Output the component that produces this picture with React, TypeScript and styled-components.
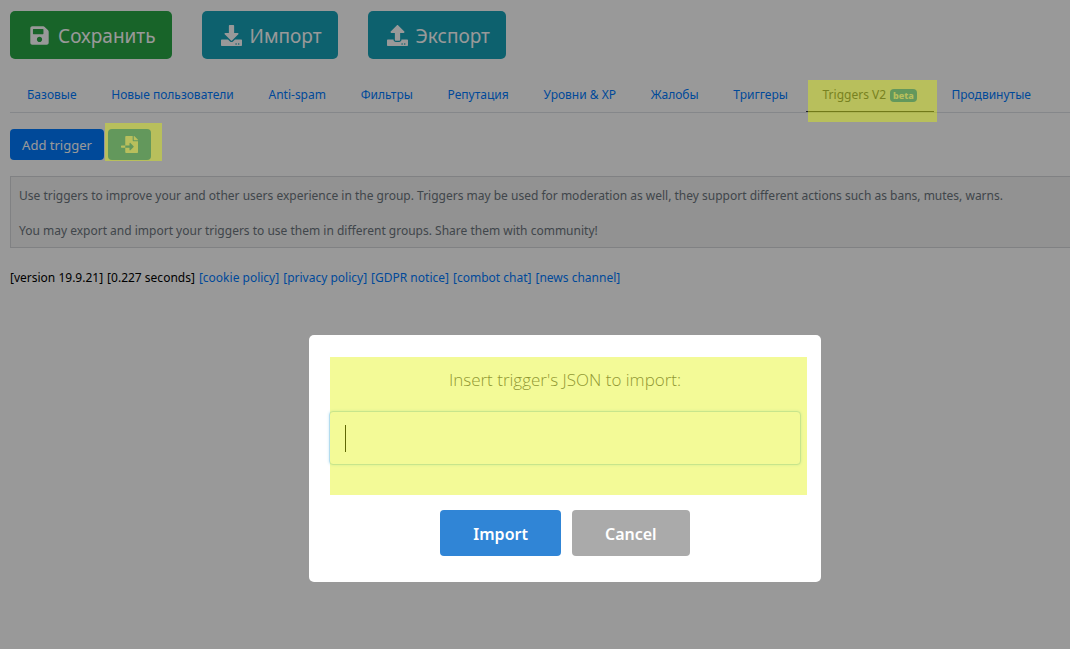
import React from "react";
import styled, { createGlobalStyle } from "styled-components";
import { FaDownload, FaFileImport, FaSave, FaUpload } from "react-icons/fa";

const GlobalStyle = createGlobalStyle`
  *, *::before, *::after { box-sizing: border-box; }
  body {
    margin: 0;
    background: #fff;
    color: #212529;
    font-family: "Noto Sans", "Open Sans", sans-serif;
    font-size: 12px;
    line-height: 18px;
    overflow-x: hidden;
  }
  button, input { font-family: inherit; }
`;

const Page = styled.main`
  min-height: 100vh;
  padding: 11px 0 0 10px;
`;

const Toolbar = styled.div`
  display: flex;
  gap: 30px;
`;

const ToolbarButton = styled.button<{ $tone: string }>`
  display: flex;
  align-items: center;
  gap: 8px;
  height: 48px;
  padding: 1px 16px 0 19px;
  border: 0;
  border-radius: 5px;
  background: ${(p) => p.$tone};
  color: #fff;
  font-size: 19px;
  white-space: nowrap;
`;

const Tabs = styled.nav`
  display: flex;
  justify-content: space-between;
  margin-top: 18px;
  padding-right: 22px;
  height: 36px;
  border-bottom: 1px solid #dee2e6;
  white-space: nowrap;
`;

const Tab = styled.a<{ $active?: boolean }>`
  position: relative;
  display: flex;
  align-items: center;
  gap: 4px;
  height: 35px;
  padding: 2px 17px 0;
  color: ${(p) => (p.$active ? "#495057" : "#007bff")};
  border-bottom: 1px solid ${(p) => (p.$active ? "#343a40" : "transparent")};
  text-decoration: none;
`;

const Badge = styled.span`
  padding: 0 3px;
  border-radius: 4px;
  background: #0c90ff;
  color: #fff;
  font-size: 9px;
  font-weight: 800;
  line-height: 13px;
`;

const Highlight = styled.span<{ $inset: string }>`
  position: absolute;
  inset: ${(p) => p.$inset};
  z-index: 30;
  background: rgba(226, 243, 8, 0.42);
  pointer-events: none;
`;

const Actions = styled.div`
  display: flex;
  gap: 4px;
  margin-top: 16px;
`;

const ActionButton = styled.button<{ $tone: string; $wide?: boolean }>`
  position: relative;
  display: flex;
  align-items: center;
  justify-content: center;
  min-width: ${(p) => (p.$wide ? "94px" : "43px")};
  height: 31px;
  padding: 0 12px;
  border: 0;
  border-radius: 4px;
  background: ${(p) => p.$tone};
  color: #fff;
  font-size: 13px;
  white-space: nowrap;
`;

const Notice = styled.section`
  margin-top: 16px;
  padding: 10px 8px 7px;
  border: 1px solid #d6d8db;
  border-right: 0;
  background: #f3f3f3;
  color: #6c757d;

  p { margin: 0; }
  p + p { margin-top: 17px; }
`;

const Footer = styled.footer`
  display: flex;
  flex-wrap: wrap;
  gap: 4px;
  margin-top: 21px;
  color: #000;
`;

const FooterLink = styled.a`
  color: #007bff;
  text-decoration: none;
`;

const Backdrop = styled.div`
  position: fixed;
  inset: 0;
  z-index: 20;
  display: flex;
  align-items: flex-start;
  justify-content: center;
  padding: 335px 0 0 60px;
  background: rgba(0, 0, 0, 0.4);
`;

const Dialog = styled.form`
  position: relative;
  width: 512px;
  padding: 33px 20px 26px;
  border-radius: 5px;
  background: #fff;
`;

const DialogLabel = styled.label`
  display: block;
  color: #545454;
  font-family: "Open Sans", "Noto Sans", sans-serif;
  font-size: 17px;
  font-weight: 300;
  line-height: 24px;
  text-align: center;
`;

const Field = styled.div`
  position: relative;
  margin-top: 19px;
`;

const TextInput = styled.input`
  display: block;
  width: 100%;
  height: 54px;
  padding: 0 16px;
  border: 1px solid #b4dbed;
  border-radius: 4px;
  outline: 0;
  box-shadow: 0 0 3px #c4e6f5;
  background: #fff;
  font-size: 18px;
`;

const Caret = styled.span`
  position: absolute;
  top: 14px;
  left: 16px;
  width: 1px;
  height: 27px;
  background: #000;
`;

const DialogActions = styled.div`
  display: flex;
  justify-content: center;
  gap: 11px;
  margin-top: 45px;
`;

const DialogButton = styled.button<{ $tone: string }>`
  height: 46px;
  padding: 2px 33px 0;
  border: 0;
  border-radius: 4px;
  background: ${(p) => p.$tone};
  color: #fff;
  font-size: 16px;
  font-weight: 600;
`;

const tabs = [
  "Базовые",
  "Новые пользователи",
  "Anti-spam",
  "Фильтры",
  "Репутация",
  "Уровни & XP",
  "Жалобы",
  "Триггеры",
];

const footerLinks = [
  "cookie policy",
  "privacy policy",
  "GDPR notice",
  "combot chat",
  "news channel",
];

export default function App() {
  return (
    <>
      <GlobalStyle />
      <Page>
        <Toolbar>
          <ToolbarButton type="button" $tone="#28a745">
            <FaSave size={21} />
            Сохранить
          </ToolbarButton>
          <ToolbarButton type="button" $tone="#17a2b8">
            <FaDownload size={21} />
            Импорт
          </ToolbarButton>
          <ToolbarButton type="button" $tone="#17a2b8">
            <FaUpload size={21} />
            Экспорт
          </ToolbarButton>
        </Toolbar>

        <Tabs>
          {tabs.map((name) => (
            <Tab key={name} href="#">
              {name}
            </Tab>
          ))}
          <Tab href="#" $active aria-current="page">
            Triggers V2 <Badge>beta</Badge>
            <Highlight $inset="3px -3px -11px 2px" />
          </Tab>
          <Tab href="#">Продвинутые</Tab>
        </Tabs>

        <Actions>
          <ActionButton type="button" $tone="#007bff" $wide>
            Add trigger
          </ActionButton>
          <ActionButton type="button" $tone="#0c90ff" aria-label="Import trigger">
            <FaFileImport size={17} />
            <Highlight $inset="-6px -11px -1px -3px" />
          </ActionButton>
        </Actions>

        <Notice>
          <p>
            Use triggers to improve your and other users experience in the group. Triggers may be
            used for moderation as well, they support different actions such as bans, mutes, warns.
          </p>
          <p>
            You may export and import your triggers to use them in different groups. Share them with
            community!
          </p>
        </Notice>

        <Footer>
          <span>[version 19.9.21]</span>
          <span>[0.227 seconds]</span>
          {footerLinks.map((name) => (
            <FooterLink key={name} href="#">
              [{name}]
            </FooterLink>
          ))}
        </Footer>
      </Page>

      <Backdrop>
        <Dialog role="dialog" aria-modal="true" aria-labelledby="json-label">
          <DialogLabel id="json-label" htmlFor="json">
            Insert trigger's JSON to import:
          </DialogLabel>
          <Field>
            <TextInput id="json" type="text" />
            <Caret />
          </Field>
          <DialogActions>
            <DialogButton type="button" $tone="#3085d6">
              Import
            </DialogButton>
            <DialogButton type="button" $tone="#aaa">
              Cancel
            </DialogButton>
          </DialogActions>
          <Highlight $inset="22px 14px 87px 21px" />
        </Dialog>
      </Backdrop>
    </>
  );
}
